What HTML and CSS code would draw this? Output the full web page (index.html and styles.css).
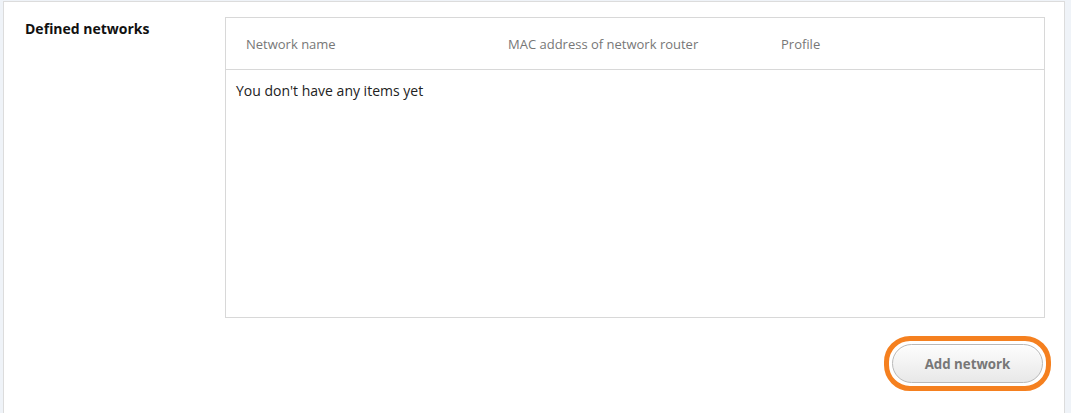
FILE: index.html
```html
<!DOCTYPE html>
<html>
<head>
<meta charset="utf-8">
<link rel="stylesheet" href="styles.css">
</head>
<body>
<div class="panel">
  <div class="row">
    <div class="label">Defined networks</div>
    <div class="content">
      <div class="table">
        <div class="thead">
          <div class="th">Network name</div>
          <div class="th">MAC address of network router</div>
          <div class="th">Profile</div>
        </div>
        <div class="tbody">
          <div class="empty">You don't have any items yet</div>
        </div>
      </div>
      <div class="actions">
        <div class="focus-ring">
          <button class="btn">Add network</button>
        </div>
      </div>
    </div>
  </div>
</div>
</body>
</html>
```
FILE: styles.css
```css
html, body {
  margin: 0;
  padding: 0;
}
body {
  background: #eff3f8;
  font-family: "Open Sans", "Noto Sans", sans-serif;
  height: 413px;
  overflow: hidden;
}
.panel {
  margin: 1px 6px 0 3px;
  background: #fff;
  border: 1px solid #dcdcdc;
  border-bottom: none;
  height: 420px;
  box-sizing: border-box;
}
.row {
  display: flex;
  padding: 15px 19px 0 21px;
}
.label {
  width: 200px;
  font-weight: 700;
  font-size: 14px;
  color: #111;
  padding-top: 2px;
  line-height: 20px;
}
.content {
  flex: 1;
  display: flex;
  flex-direction: column;
}
.table {
  border: 1px solid #d8d8d8;
  height: 301px;
  box-sizing: border-box;
}
.thead {
  display: grid;
  grid-template-columns: 262px 273px 1fr;
  height: 52px;
  border-bottom: 1px solid #d8d8d8;
  box-sizing: border-box;
  align-items: center;
}
.th {
  padding-left: 20px;
  font-size: 13px;
  color: #777;
}
.tbody {
  padding: 11px 10px;
}
.empty {
  font-size: 14px;
  color: #222;
}
.actions {
  display: flex;
  justify-content: flex-end;
  padding-top: 18px;
}
.focus-ring {
  border: 5px solid #f5801f;
  border-radius: 26px;
  padding: 3px;
  margin-right: -6px;
}
.btn {
  display: block;
  width: 151px;
  height: 39px;
  border: 1px solid #b9b9b9;
  border-radius: 20px;
  background: linear-gradient(#fdfdfd, #e8e8e8);
  box-shadow: inset 0 1px 0 #fff;
  font-family: "Open Sans", "Noto Sans", sans-serif;
  font-weight: 700;
  font-size: 13.3px;
  color: #777;
  cursor: pointer;
}
```
